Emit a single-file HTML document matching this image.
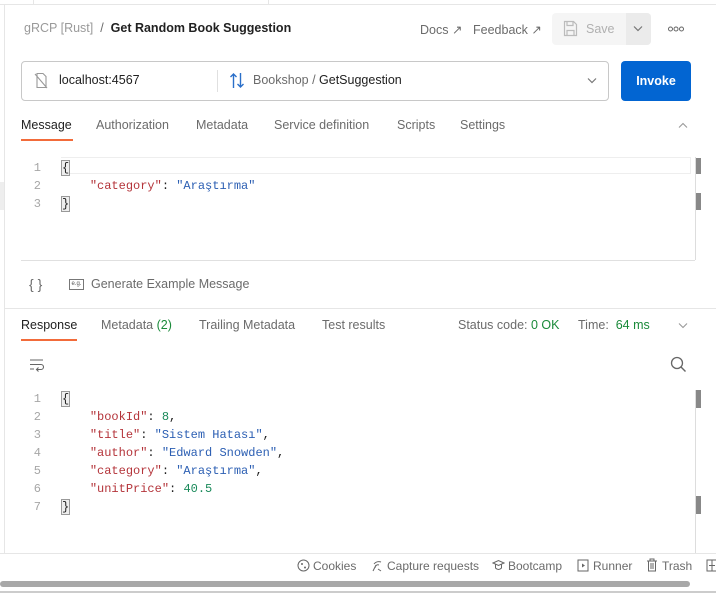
<!DOCTYPE html>
<html><head><meta charset="utf-8"><style>
*{margin:0;padding:0;box-sizing:border-box}
body{width:716px;height:593px;overflow:hidden;background:#fff;font-family:"Liberation Sans",sans-serif;font-size:12.5px;color:#212121;position:relative}
.a{position:absolute;white-space:nowrap}
.mono{font-family:"Liberation Mono",monospace;font-size:12px}
.g{color:#6b6b6b}
.ln{color:#a6a6a6;width:20px;text-align:right}
.k{color:#b4343a}.s{color:#2c5fb3}.n{color:#1a8a5a}
.br{border:1px solid #999;background:#eee;line-height:13px}
svg{position:absolute}
</style></head><body>
<div class="a" style="left:0;top:0;width:716px;height:5px;border-bottom:1px solid #e6e6e6"></div>
<div class="a" style="left:33px;top:0;width:1px;height:5px;background:#e6e6e6"></div>
<div class="a" style="left:268px;top:0;width:1px;height:5px;background:#e6e6e6"></div>
<div class="a" style="left:4px;top:5px;width:1px;height:548px;background:#e6e6e6"></div>
<div class="a" style="left:0;top:182px;width:4px;height:28px;background:#eee"></div>

<div class="a" style="left:24px;top:21px;font-size:12.5px"><span style="color:#9a9a9a">gRCP [Rust]</span> <span style="color:#6b6b6b">&nbsp;/&nbsp;</span> <b style="color:#212121">Get Random Book Suggestion</b></div>
<div class="a g" style="left:420px;top:22px">Docs ↗</div>
<div class="a g" style="left:473px;top:22px">Feedback ↗</div>
<div class="a" style="left:552px;top:13px;width:99px;height:32px;background:#f5f5f5;border-radius:4px"></div>
<div class="a" style="left:626px;top:13px;width:25px;height:32px;background:#ebebeb;border-radius:0 4px 4px 0"></div>
<svg style="left:633px;top:25px" width="10" height="7"><path d="M1 1.5l4 4 4-4" fill="none" stroke="#777" stroke-width="1.2"/></svg>
<svg style="left:563px;top:20px" width="15" height="17"><path d="M1.5 1.5h9l3 3v11h-12z M4 1.5v4h6v-4 M4 15.5v-5h7v5" fill="none" stroke="#bbb" stroke-width="1.2"/></svg>
<div class="a" style="left:586px;top:22px;color:#b0b0b0">Save</div>
<svg style="left:668px;top:26px" width="16" height="6"><circle cx="2.5" cy="3" r="2" fill="none" stroke="#666"/><circle cx="8" cy="3" r="2" fill="none" stroke="#666"/><circle cx="13.5" cy="3" r="2" fill="none" stroke="#666"/></svg>

<div class="a" style="left:21px;top:61px;width:588px;height:40px;border:1px solid #c8c8c8;border-radius:4px"></div>
<svg style="left:34px;top:72px" width="14" height="17"><path d="M3 1.5h6l3 3v11h-9z M1 2l12 14" fill="none" stroke="#999" stroke-width="1.1"/></svg>
<div class="a" style="left:59px;top:73px">localhost:4567</div>
<div class="a" style="left:217px;top:70px;width:1px;height:22px;background:#e0e0e0"></div>
<svg style="left:229px;top:72px" width="16" height="17"><path d="M4.5 16V2M1.5 5l3-3 3 3M11.5 1v14M8.5 12l3 3 3-3" fill="none" stroke="#2a6fc9" stroke-width="1.4"/></svg>
<div class="a" style="left:253px;top:73px"><span class="g">Bookshop /</span> GetSuggestion</div>
<svg style="left:587px;top:77px" width="10" height="7"><path d="M1 1.5l4 4 4-4" fill="none" stroke="#777" stroke-width="1.2"/></svg>
<div class="a" style="left:621px;top:61px;width:70px;height:40px;background:#0265d2;border-radius:4px;color:#fff;font-weight:bold;text-align:center;line-height:40px">Invoke</div>

<div class="a" style="left:21px;top:118px">Message</div>
<div class="a g" style="left:96px;top:118px">Authorization</div>
<div class="a g" style="left:196px;top:118px">Metadata</div>
<div class="a g" style="left:274px;top:118px">Service definition</div>
<div class="a g" style="left:397px;top:118px">Scripts</div>
<div class="a g" style="left:460px;top:118px">Settings</div>
<svg style="left:678px;top:122px" width="10" height="7"><path d="M1 5.5l4-4 4 4" fill="none" stroke="#999" stroke-width="1.1"/></svg>
<div class="a" style="left:21px;top:139px;width:52px;height:2px;background:#f26b3a"></div>

<div class="a" style="left:61px;top:157px;width:630px;height:17px;border:1px solid #eee;border-left:none"></div>
<div class="a" style="left:695px;top:157px;width:1px;height:103px;background:#ddd"></div>
<div class="a" style="left:696px;top:158px;width:5px;height:16px;background:#888"></div>
<div class="a" style="left:696px;top:193px;width:5px;height:17px;background:#888"></div>
<div class="a" style="left:21px;top:260px;width:674px;height:1px;background:#e0e0e0"></div>
<div class="a mono ln" style="left:21px;top:159px;line-height:18px">1<br>2<br>3</div>
<div class="a mono" style="left:61px;top:159px;line-height:18px"><span class="br">{</span><br>&nbsp;&nbsp;&nbsp;&nbsp;<span class="k">"category"</span>: <span class="s">"Araştırma"</span><br><span class="br">}</span></div>

<div class="a g" style="left:29px;top:276px;font-size:14px">{ }</div>
<div class="a" style="left:69px;top:279px;width:15px;height:11px;border:1px solid #777;font-size:6px;line-height:9px;text-align:center;color:#555">e.g.</div>
<div class="a g" style="left:91px;top:277px">Generate Example Message</div>
<div class="a" style="left:4px;top:308px;width:712px;height:1px;background:#e6e6e6"></div>

<div class="a" style="left:21px;top:318px">Response</div>
<div class="a g" style="left:101px;top:318px">Metadata <span style="color:#1a8a3a">(2)</span></div>
<div class="a g" style="left:199px;top:318px">Trailing Metadata</div>
<div class="a g" style="left:322px;top:318px">Test results</div>
<div class="a g" style="left:458px;top:318px">Status code: <span style="color:#1a8a3a">0 OK</span></div>
<div class="a g" style="left:578px;top:318px">Time: &nbsp;<span style="color:#1a8a3a">64 ms</span></div>
<svg style="left:678px;top:322px" width="10" height="7"><path d="M1 1.5l4 4 4-4" fill="none" stroke="#999" stroke-width="1.1"/></svg>
<div class="a" style="left:21px;top:339px;width:56px;height:2px;background:#f26b3a"></div>

<svg style="left:29px;top:358px" width="16" height="14"><path d="M1 2h13M1 6.5h11a2.5 2.5 0 010 5H8M9.5 9.5l-2 2 2 2M1 11h4" fill="none" stroke="#666" stroke-width="1.1"/></svg>
<svg style="left:670px;top:356px" width="17" height="17"><circle cx="7" cy="7" r="5.5" fill="none" stroke="#666" stroke-width="1.3"/><path d="M11 11l4.5 4.5" stroke="#666" stroke-width="1.4"/></svg>

<div class="a mono ln" style="left:21px;top:390px;line-height:18px">1<br>2<br>3<br>4<br>5<br>6<br>7</div>
<div class="a mono" style="left:61px;top:390px;line-height:18px"><span class="br">{</span><br>&nbsp;&nbsp;&nbsp;&nbsp;<span class="k">"bookId"</span>: <span class="n">8</span>,<br>&nbsp;&nbsp;&nbsp;&nbsp;<span class="k">"title"</span>: <span class="s">"Sistem Hatası"</span>,<br>&nbsp;&nbsp;&nbsp;&nbsp;<span class="k">"author"</span>: <span class="s">"Edward Snowden"</span>,<br>&nbsp;&nbsp;&nbsp;&nbsp;<span class="k">"category"</span>: <span class="s">"Araştırma"</span>,<br>&nbsp;&nbsp;&nbsp;&nbsp;<span class="k">"unitPrice"</span>: <span class="n">40.5</span><br><span class="br">}</span></div>
<div class="a" style="left:695px;top:390px;width:1px;height:163px;background:#ddd"></div>
<div class="a" style="left:696px;top:390px;width:5px;height:18px;background:#888"></div>
<div class="a" style="left:696px;top:496px;width:5px;height:18px;background:#888"></div>

<div class="a" style="left:0;top:553px;width:716px;height:1px;background:#e6e6e6"></div>
<svg style="left:297px;top:559px" width="13" height="13"><circle cx="6.5" cy="6.5" r="5.5" fill="none" stroke="#666"/><circle cx="5" cy="5" r="1" fill="#666"/><circle cx="8" cy="8.5" r="1" fill="#666"/></svg>
<div class="a g" style="left:313px;top:559px;font-size:12px">Cookies</div>
<svg style="left:370px;top:559px" width="13" height="13"><path d="M3 12l3-6M5 9a3 3 0 014-3M4 5a6 6 0 017-2M8 10l3 2" fill="none" stroke="#666"/></svg>
<div class="a g" style="left:387px;top:559px;font-size:12px">Capture requests</div>
<svg style="left:492px;top:559px" width="13" height="13"><path d="M1 4l5.5-2.5L12 4 6.5 6.5z M3.5 5v4c2 2 4 2 6 0V5" fill="none" stroke="#666"/></svg>
<div class="a g" style="left:508px;top:559px;font-size:12px">Bootcamp</div>
<svg style="left:577px;top:559px" width="12" height="13"><rect x="1" y="1" width="10" height="11" fill="none" stroke="#666"/><path d="M5 4.5l3 2-3 2z" fill="#666"/></svg>
<div class="a g" style="left:593px;top:559px;font-size:12px">Runner</div>
<svg style="left:646px;top:558px" width="12" height="14"><path d="M1 3h10M4 3V1h4v2M2.5 3v10h7V3M5 5v6M7 5v6" fill="none" stroke="#666"/></svg>
<div class="a g" style="left:662px;top:559px;font-size:12px">Trash</div>
<svg style="left:706px;top:559px" width="12" height="13"><rect x="1" y="1" width="10" height="11" fill="none" stroke="#666"/><path d="M6 1v11M3 6.5h6" stroke="#666"/></svg>
<div class="a" style="left:0;top:581px;width:690px;height:6px;background:#a8a8a8;border-radius:3px"></div>
<div class="a" style="left:0;top:591px;width:716px;height:2px;background:#ccc"></div>
</body></html>
